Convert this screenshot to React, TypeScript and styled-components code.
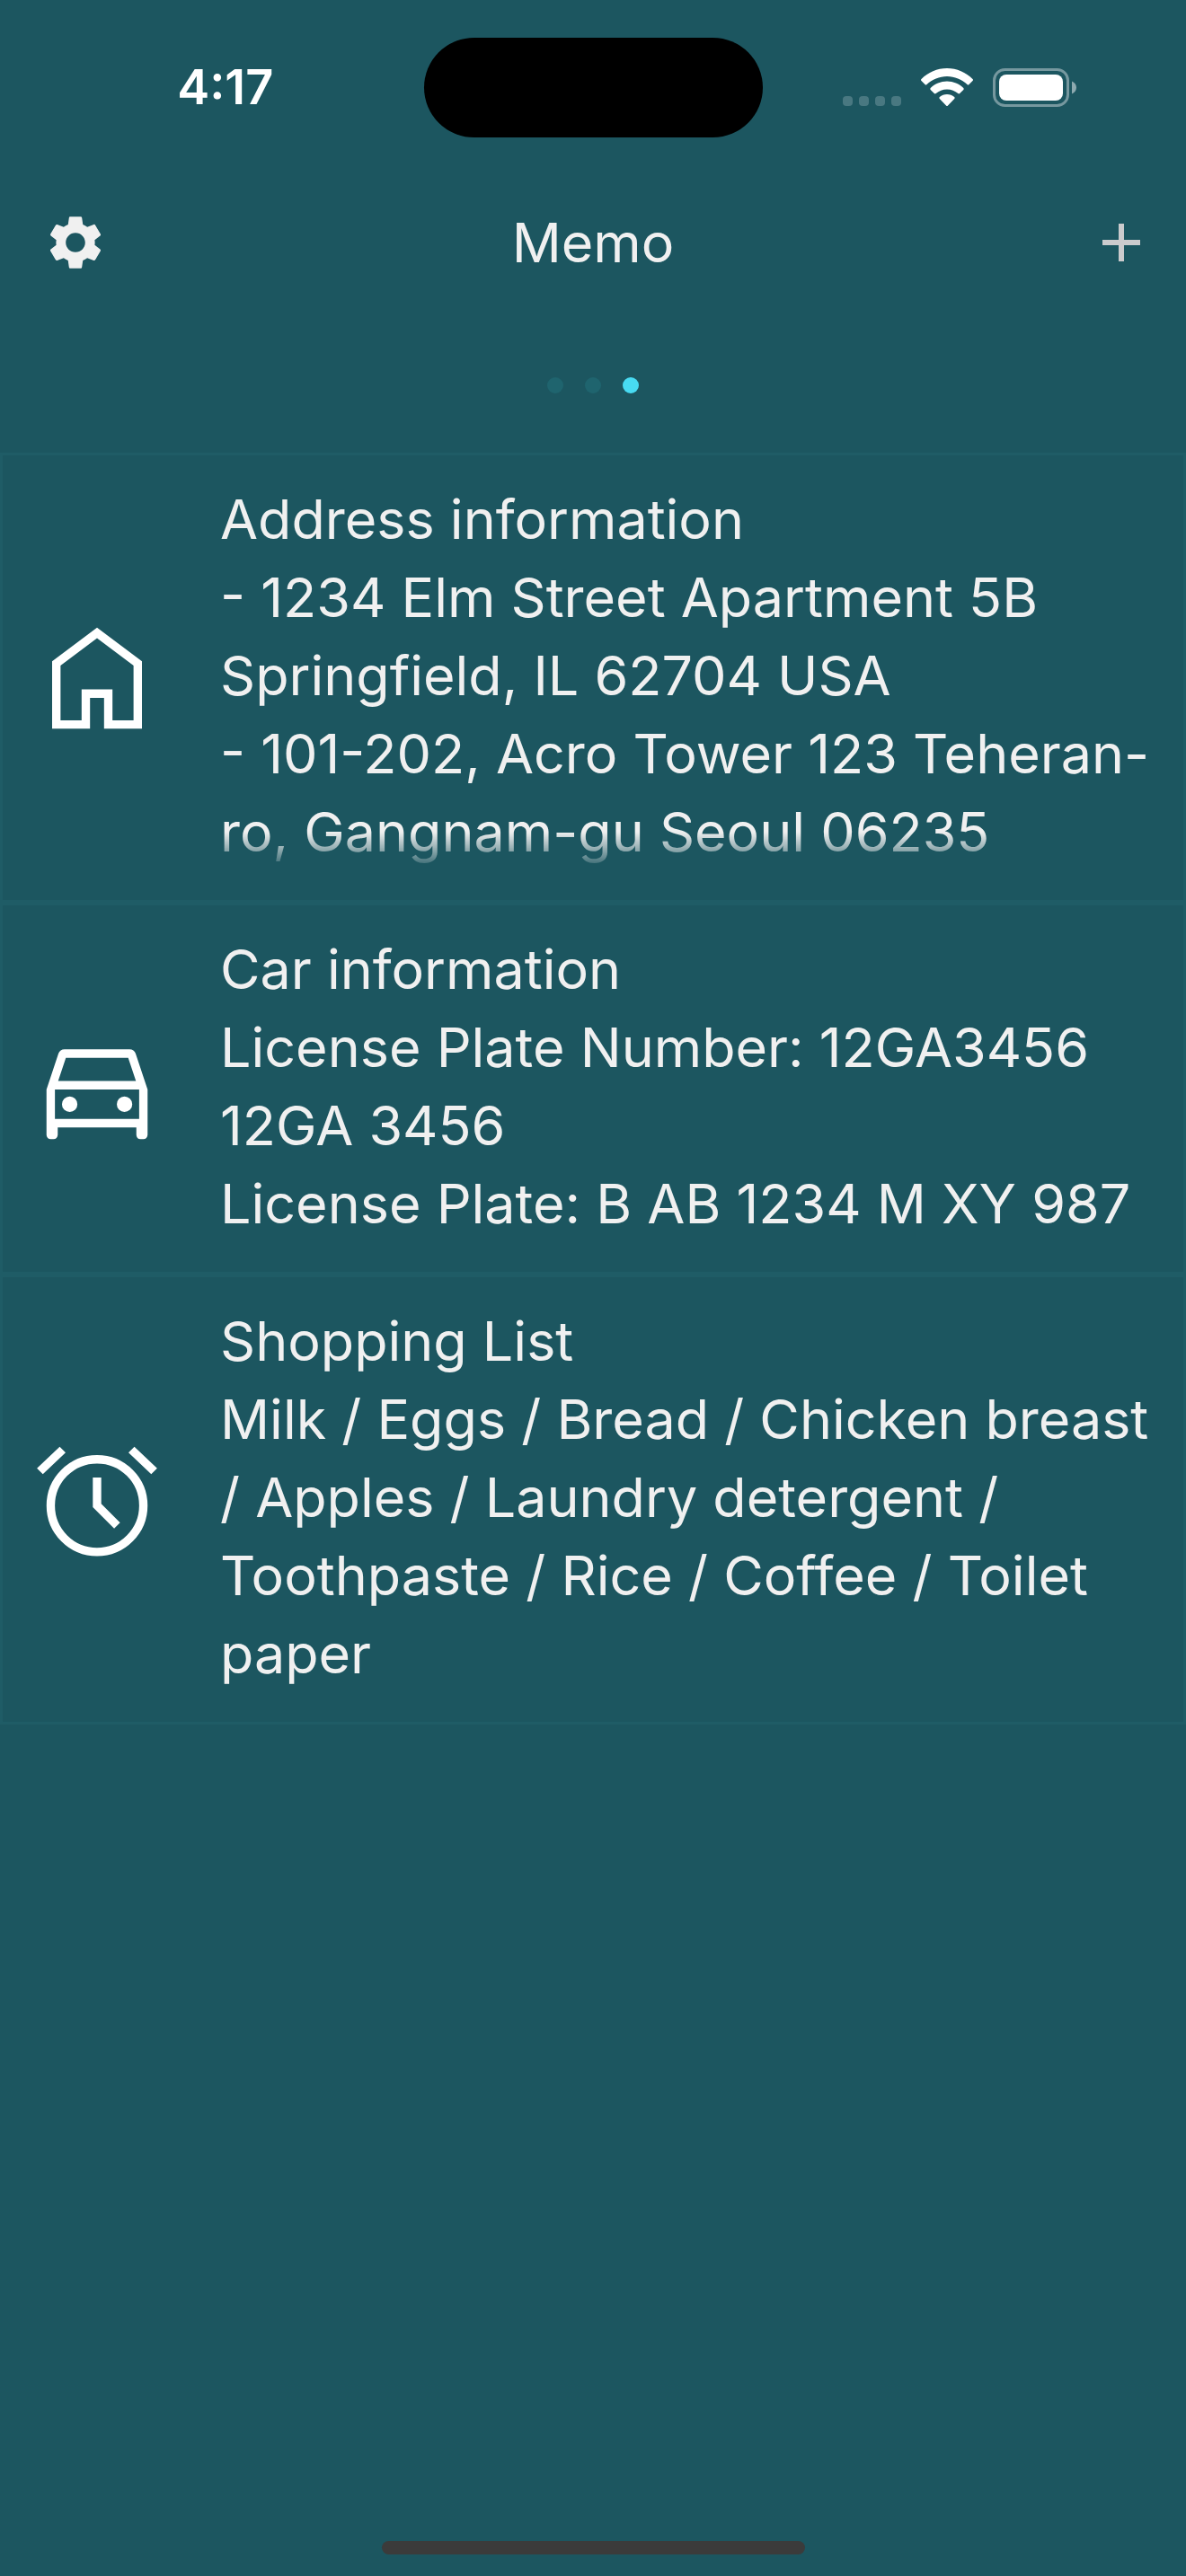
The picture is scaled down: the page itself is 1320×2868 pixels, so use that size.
import React from "react";
import styled, { createGlobalStyle } from "styled-components";
import { MdAdd, MdSettings } from "react-icons/md";

const GlobalStyle = createGlobalStyle`
  *, *::before, *::after { box-sizing: border-box; }
  body {
    margin: 0;
    background: #1c5660;
    color: #f0f0f0;
    font-family: Inter, "Liberation Sans", sans-serif;
  }
`;

const Screen = styled.div`
  min-height: 100vh;
  display: flex;
  flex-direction: column;
`;

const StatusBar = styled.div`
  display: grid;
  grid-template-columns: 1fr 377px 1fr;
  align-items: center;
  height: 192px;
  padding-top: 2px;
  color: #fff;
`;

const Clock = styled.time`
  justify-self: center;
  padding-left: 30px;
  font-size: 54px;
  line-height: 60px;
  font-weight: 600;
`;

const Island = styled.div`
  height: 111px;
  border-radius: 56px;
  background: #000;
`;

const StatusIcons = styled.div`
  display: flex;
  align-items: center;
  justify-content: flex-end;
  gap: 22px;
  padding-right: 121px;
`;

const Signal = styled.div`
  display: flex;
  align-self: flex-end;
  gap: 7px;
  padding-bottom: 1px;
`;

const SignalDot = styled.span`
  width: 11px;
  height: 11px;
  border-radius: 4px;
  background: #497881;
`;

const Header = styled.header`
  display: grid;
  grid-template-columns: 96px 1fr 96px;
  align-items: center;
  height: 156px;
  padding: 0 36px;
`;

const Title = styled.h1`
  margin: 0;
  text-align: center;
  font-size: 61px;
  line-height: 78px;
  font-weight: 400;
`;

const IconButton = styled.button<{ $color: string; $align: "center" | "end" }>`
  display: flex;
  align-items: center;
  justify-content: center;
  justify-self: ${(p) => p.$align};
  width: 72px;
  height: 72px;
  padding: 0;
  border: 0;
  background: none;
  color: ${(p) => p.$color};
  cursor: pointer;
`;

const Pager = styled.nav`
  display: flex;
  align-items: center;
  justify-content: center;
  gap: 24px;
  height: 156px;
  padding-top: 6px;
`;

const PageDot = styled.button<{ $active: boolean }>`
  width: 18px;
  height: 18px;
  padding: 0;
  border: 0;
  border-radius: 50%;
  background: ${(p) => (p.$active ? "#48dbf2" : "#1f646e")};
`;

const MemoList = styled.ul`
  flex: 1;
  margin: 0;
  padding: 0;
  list-style: none;
`;

const MemoCard = styled.li`
  display: flex;
  align-items: center;
  gap: 62px;
  padding: 0 30px;
  border: 3px solid #1f5c66;
`;

const MemoIcon = styled.svg`
  flex: none;
  width: 150px;
  height: 150px;
  fill: #fff;
`;

const MemoText = styled.p<{ $faded: boolean }>`
  flex: 1;
  min-width: 0;
  margin: 28px 0 32px;
  font-size: 61px;
  line-height: 87px;
  font-weight: 400;
  white-space: pre-line;
  ${(p) => p.$faded && "mask-image: linear-gradient(to top, transparent, #000 44px);"}
`;

const BottomBar = styled.footer`
  display: flex;
  justify-content: center;
  padding-bottom: 24px;
`;

const HomeIndicator = styled.div`
  width: 471px;
  height: 15px;
  border-radius: 8px;
  background: #3b3b3b;
`;

const HomeGlyph = () => (
  <path d="M220-180h150v-220h220v220h150v-390L480-765 220-570v390Zm-60 60v-480l320-240 320 240v480H530v-220H430v220H160Z" />
);

const CarGlyph = () => (
  <path d="M200-204v54q0 12.750-8.620 21.370Q182.750-120 170-120h-20q-12.750 0-21.370-8.630Q120-137.250 120-150v-324l85-256q5-14 16.500-22t26.500-8h464q15 0 26.500 8t16.500 22l85 256v324q0 12.750-8.620 21.370Q822.750-120 810-120h-21q-13 0-21-8.630-8-8.620-8-21.370v-54H200Zm3-330h554l-55-166H258l-55 166Zm-23 60v210-210Zm105.760 160q23.240 0 38.740-15.750Q340-345.500 340-368q0-23.330-15.750-39.670Q308.500-424 286-424q-23.330 0-39.670 16.260Q230-391.470 230-368.240q0 23.240 16.260 38.740 16.270 15.500 39.500 15.500ZM675-314q23.330 0 39.670-15.750Q731-345.500 731-368q0-23.330-16.260-39.670Q698.470-424 675.240-424q-23.240 0-38.740 16.260-15.500 16.270-15.500 39.500 0 23.240 15.750 38.740Q652.500-314 675-314Zm-495 50h600v-210H180v210Z" />
);

const AlarmGlyph = () => (
  <>
    <circle cx="480" cy="-440" r="330" fill="none" stroke="#fff" strokeWidth="60" />
    <path d="M450-640h60v187l134 134-42 42-152-152v-211ZM214-860l42 42L94-664l-42-42 162-154ZM746-860l162 154-42 42-162-154 42-42Z" />
  </>
);

const memos = [
  {
    id: "address",
    Glyph: HomeGlyph,
    faded: true,
    text: "Address information\n- 1234 Elm Street Apartment 5B Springfield, IL 62704 USA\n- 101-202, Acro Tower 123 Teheran-ro, Gangnam-gu Seoul 06235",
  },
  {
    id: "car",
    Glyph: CarGlyph,
    faded: false,
    text: "Car information\nLicense Plate Number: 12GA3456\n12GA 3456\nLicense Plate: B AB 1234 M XY 987",
  },
  {
    id: "shopping",
    Glyph: AlarmGlyph,
    faded: false,
    text: "Shopping List\nMilk / Eggs / Bread / Chicken breast / Apples / Laundry detergent / Toothpaste / Rice / Coffee / Toilet paper",
  },
];

const pages = ["First page", "Second page", "Third page"];

export default function App() {
  return (
    <Screen>
      <GlobalStyle />
      <StatusBar>
        <Clock>4:17</Clock>
        <Island />
        <StatusIcons>
          <Signal>
            {[0, 1, 2, 3].map((n) => (
              <SignalDot key={n} />
            ))}
          </Signal>
          <svg width="58" height="43" viewBox="0 0 58 43" fill="#fff" aria-hidden="true">
            <path d="M29 0C40 0 50 4.500 57.500 12Q58.500 13 57.500 14L53.500 18Q52.500 19 51.500 18C45.500 12.500 37.500 9 29 9S12.500 12.500 6.500 18Q5.500 19 4.500 18L.5 14Q-.5 13 .5 12C8 4.500 18 0 29 0Z" />
            <path d="M29 14.500C36 14.500 42.500 17.300 47.300 22Q48.200 23 47.300 24L43.200 28.100Q42.300 29 41.300 28.100C38 25.200 33.700 23.500 29 23.500S20 25.200 16.700 28.100Q15.700 29 14.800 28.100L10.700 24Q9.800 23 10.700 22C15.500 17.300 22 14.500 29 14.500Z" />
            <path d="M29 29C32.200 29 35 30.200 37.200 32Q38.200 33 37.200 34L30 41.600Q29 42.600 28 41.600L20.800 34Q19.800 33 20.800 32C23 30.200 25.800 29 29 29Z" />
          </svg>
          <svg width="94" height="43" viewBox="0 0 94 43" fill="none" aria-hidden="true">
            <rect x="1.500" y="1.500" width="82" height="40" rx="12" stroke="#76989f" strokeWidth="3" />
            <rect x="7" y="7" width="71" height="29" rx="8" fill="#fff" />
            <path d="M88 14.500c3 1.200 5 4 5 7s-2 5.800-5 7Z" fill="#8eaab0" />
          </svg>
        </StatusIcons>
      </StatusBar>
      <Header>
        <IconButton type="button" aria-label="Settings" $color="#f0f0f0" $align="center">
          <MdSettings size={72} />
        </IconButton>
        <Title>Memo</Title>
        <IconButton type="button" aria-label="Add memo" $color="#cbcbcd" $align="end">
          <MdAdd size={72} />
        </IconButton>
      </Header>
      <Pager aria-label="Memo pages">
        {pages.map((label, i) => (
          <PageDot key={label} type="button" aria-label={label} $active={i === 2} />
        ))}
      </Pager>
      <MemoList>
        {memos.map(({ id, Glyph, faded, text }) => (
          <MemoCard key={id}>
            <MemoIcon viewBox="0 -960 960 960" aria-hidden="true">
              <Glyph />
            </MemoIcon>
            <MemoText $faded={faded}>{text}</MemoText>
          </MemoCard>
        ))}
      </MemoList>
      <BottomBar>
        <HomeIndicator />
      </BottomBar>
    </Screen>
  );
}
